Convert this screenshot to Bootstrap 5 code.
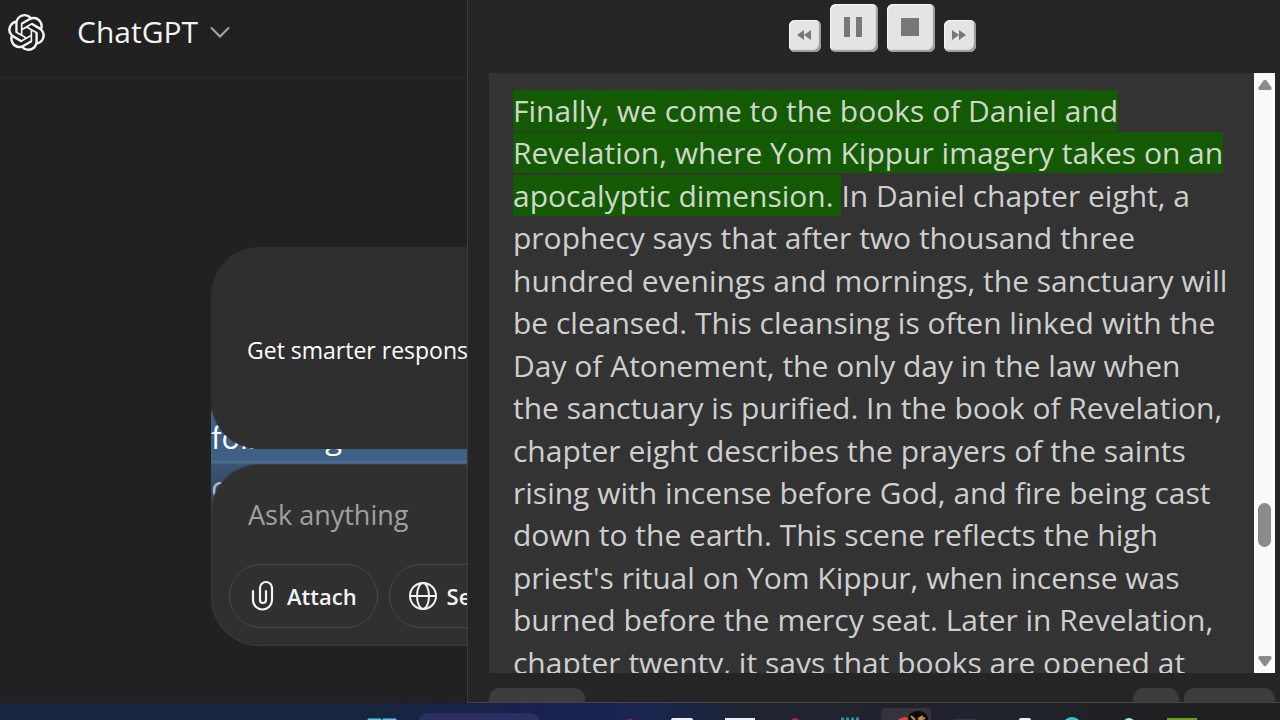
<!DOCTYPE html>
<html lang="en">
<head>
<meta charset="utf-8">
<meta name="viewport" content="width=device-width, initial-scale=1">
<title>ChatGPT</title>
<link href="https://cdn.jsdelivr.net/npm/bootstrap@5.3.0/dist/css/bootstrap.min.css" rel="stylesheet">
<style>
body{background:#212121;color:#fff;font-family:"Open Sans","Noto Sans",sans-serif}
.panes{min-height:0}
.chat-pane{width:467px;background:#212121}
.chat-head{height:78px;padding:0 8px;border-bottom:1px solid #2e2e2e}
.head-row{height:64px;gap:32px}
.model-btn{font-size:30px;line-height:40px;color:#f3f3f3;gap:12px}
.stack{width:760px;margin:169px 0 0 211px;gap:15px}
.quote{left:0;right:0;top:163px;height:110px;padding-top:2px;background:linear-gradient(#3f5f85 0 50px,#48688c 50px 53px,#3a5674 54px,#2b3a4a 110px);font-size:31px;line-height:50px}
.quote-dim{color:#aeb8c4}
.promo{height:202px;padding:4px 36px 0;border-radius:48px;background:#2f2f2f;font-size:23px}
.composer{height:182px;border-radius:48px;background:#303030;border:1px solid #3c3c3c;padding:21px 17px 17px}
.ask{font-size:27px;line-height:40px;height:56px;padding:6px 19px;color:#fff;background:none;border:0;outline:0}
.ask::placeholder{color:#a0a0a0;opacity:1}
.pill-btn{height:64px;border:1px solid #484848;border-radius:32px;padding:0 20px 0 18px;color:#f3f3f3;font-size:22px;font-weight:600;background:none;gap:9px}
.pill-row{gap:11px}
.reader{background:#252525;border-left:1px solid #3c3c3c;border-bottom:1px solid #444;padding:0 5px 0 21px}
.controls{height:73px;gap:9px;padding-bottom:21px}
.key{width:32px;height:32px;border:0;border-radius:6px;background:#e4e4e4;box-shadow:inset -2px -2px 1px #999,inset 1px 1px 1px #f8f8f8;padding:0 2px 2px 0}
.key-lg{width:48px;height:48px}
.page-text{background:#333;color:#cfcfcf;font-size:30px;line-height:1.415;padding:17px 0 0 24px;min-height:0}
.page-text mark{background:#145a02;color:#cfd8cc;padding:0}
.rail{width:21px;background:#fafafa;padding:6px 0}
.thumb{width:13px;height:44px;border-radius:7px;background:#8b8b8b;top:430px;left:4px}
.foot{height:29px;padding-top:15px;gap:5px}
.chip{height:40px;border:0;border-radius:11px;background:#3d3d3d}
.chip-sm{width:46px}
.chip-md{width:91px}
.chip-lg{width:96px}
.taskbar{height:17px;background:linear-gradient(90deg,#17253f 0,#17253f 30%,#182050 42%,#182650 50%,#20242f 59%,#20222c 80%,#202020 95%)}
</style>
</head>
<body class="vh-100 overflow-hidden d-flex flex-column">
<div class="panes d-flex flex-grow-1 overflow-hidden">
<main class="chat-pane flex-shrink-0 overflow-hidden">
<header class="chat-head"><div class="head-row d-flex align-items-center">
<svg width="37" height="37" viewBox="0 0 24 24" fill="#f3f3f3" aria-label="OpenAI"><path d="M22.28 9.82a5.98 5.98 0 0 0-.52-4.91 6.05 6.05 0 0 0-6.51-2.9A6.07 6.07 0 0 0 4.98 4.18a5.98 5.98 0 0 0-4 2.9 6.05 6.05 0 0 0 .75 7.1 5.98 5.98 0 0 0 .51 4.91 6.05 6.05 0 0 0 6.51 2.9A5.98 5.98 0 0 0 13.26 24a6.06 6.06 0 0 0 5.77-4.21 5.99 5.99 0 0 0 4-2.9 6.06 6.06 0 0 0-.75-7.07zm-9.02 12.61a4.48 4.48 0 0 1-2.88-1.04l.14-.08 4.78-2.76a.8.8 0 0 0 .39-.68v-6.74l2.02 1.17a.07.07 0 0 1 .04.05v5.58a4.5 4.5 0 0 1-4.49 4.5zM3.6 18.3a4.47 4.47 0 0 1-.54-3.01l.14.09 4.78 2.76a.77.77 0 0 0 .78 0l5.85-3.37v2.33a.08.08 0 0 1-.04.06L9.74 19.95a4.5 4.5 0 0 1-6.14-1.65zM2.34 7.9a4.49 4.49 0 0 1 2.37-1.97V11.6a.77.77 0 0 0 .39.68l5.81 3.35-2.02 1.17a.08.08 0 0 1-.07 0l-4.83-2.79A4.5 4.5 0 0 1 2.34 7.87zm16.6 3.85-5.84-3.39L15.12 7.2a.08.08 0 0 1 .07 0l4.83 2.79a4.49 4.49 0 0 1-.68 8.1v-5.67a.79.79 0 0 0-.4-.67zm2.01-3.02-.14-.09-4.77-2.78a.78.78 0 0 0-.79 0L9.41 9.23V6.9a.07.07 0 0 1 .03-.06l4.83-2.79a4.5 4.5 0 0 1 6.68 4.66zM8.31 12.86l-2.02-1.16a.08.08 0 0 1-.04-.06V6.07a4.5 4.5 0 0 1 7.38-3.45l-.14.08L8.7 5.46a.8.8 0 0 0-.39.68zm1.1-2.37L12.01 9l2.61 1.5v3l-2.6 1.5-2.61-1.5z"/></svg>
<button class="model-btn btn p-0 border-0 d-flex align-items-center">ChatGPT
<svg width="20" height="12" viewBox="0 0 20 12" fill="none" stroke="#a8a8a8" stroke-width="2"><path d="M1 1.500 10 10.500 19 1.500"/></svg></button>
</div></header>
<section class="stack d-flex flex-column position-relative">
<div class="quote position-absolute"><div>following</div><div class="quote-dim">of</div></div>
<div class="promo position-relative d-flex align-items-center text-nowrap"><span>Get smarter responses</span></div>
<form class="composer position-relative d-flex flex-column justify-content-between">
<input class="ask w-100" type="text" placeholder="Ask anything" aria-label="Ask anything">
<div class="pill-row d-flex">
<button type="button" class="pill-btn d-flex align-items-center"><svg width="30" height="32" viewBox="0 0 30 32" fill="none" stroke="#f3f3f3" stroke-width="2.200" stroke-linecap="round"><path d="M5 11v9a9.500 9.500 0 0 0 19 0V8a6 6 0 0 0-12 0v12a3 3 0 0 0 6 0V11"/></svg>Attach</button>
<button type="button" class="pill-btn d-flex align-items-center"><svg width="30" height="30" viewBox="0 0 30 30" fill="none" stroke="#f3f3f3" stroke-width="2"><circle cx="15" cy="15" r="13"/><ellipse cx="15" cy="15" rx="6" ry="13"/><path d="M2 15h26"/></svg>Search</button>
</div></form>
</section>
</main>
<aside class="reader flex-grow-1 d-flex flex-column overflow-hidden">
<div class="controls d-flex flex-shrink-0 justify-content-center align-items-end">
<button class="key d-flex align-items-center justify-content-center" aria-label="Rewind"><svg width="14" height="10" fill="#777"><path d="M7 0v10L0 5zM14 0v10L7 5z"/></svg></button>
<button class="key key-lg d-flex align-items-center justify-content-center" aria-label="Pause"><svg width="18" height="20" fill="#777"><path d="M0 0h6v20H0zM12 0h6v20h-6z"/></svg></button>
<button class="key key-lg d-flex align-items-center justify-content-center" aria-label="Stop"><svg width="18" height="18" fill="#777"><path d="M0 0h18v18H0z"/></svg></button>
<button class="key d-flex align-items-center justify-content-center" aria-label="Forward"><svg width="14" height="10" fill="#777"><path d="M0 0v10l7-5zM7 0v10l7-5z"/></svg></button>
</div>
<div class="d-flex flex-grow-1 overflow-hidden">
<article class="page-text flex-grow-1 overflow-hidden text-nowrap"><mark>Finally, we come to the books of Daniel and<br>Revelation, where Yom Kippur imagery takes on an<br>apocalyptic dimension. </mark>In Daniel chapter eight, a<br>prophecy says that after two thousand three<br>hundred evenings and mornings, the sanctuary will<br>be cleansed. This cleansing is often linked with the<br>Day of Atonement, the only day in the law when<br>the sanctuary is purified. In the book of Revelation,<br>chapter eight describes the prayers of the saints<br>rising with incense before God, and fire being cast<br>down to the earth. This scene reflects the high<br>priest's ritual on Yom Kippur, when incense was<br>burned before the mercy seat. Later in Revelation,<br>chapter twenty, it says that books are opened at</article>
<div class="rail flex-shrink-0 position-relative d-flex flex-column justify-content-between align-items-center">
<svg width="14" height="11" fill="#8b8b8b"><path d="M5.500 1.500Q7 0 8.500 1.500L13.500 8.500Q14 11 12 11H2Q0 11 .5 8.500z"/></svg>
<div class="thumb position-absolute"></div>
<svg width="14" height="11" fill="#8b8b8b"><path d="M5.500 9.500Q7 11 8.500 9.500L13.500 2.500Q14 0 12 0H2Q0 0 .5 2.500z"/></svg>
</div>
</div>
<div class="foot d-flex flex-shrink-0 overflow-hidden"><button class="chip chip-lg me-auto" aria-label="Speed"></button><button class="chip chip-sm" aria-label="Text size"></button><button class="chip chip-md" aria-label="Settings"></button></div>
</aside>
</div>
<footer class="taskbar flex-shrink-0 d-flex justify-content-center overflow-hidden">
<svg class="flex-shrink-0" width="1280" height="17" viewBox="0 703 1280 17">
<path d="M368 720v-1h13v1zm15 0v-1h13v1z" fill="#5cc8e8" stroke="#5cc8e8"/>
<rect x="418" y="713" width="122" height="20" rx="10" fill="#2b3060"/>
<circle cx="630" cy="723" r="4" fill="#c2185b"/>
<rect x="671" y="718" width="22" height="8" rx="2" fill="#eef"/>
<path d="M725 718h30v3h-30z" fill="#eef"/>
<circle cx="795" cy="723" r="5" fill="#c2185b"/>
<path d="M841 719h20" stroke="#2397a5" stroke-width="3" stroke-dasharray="3 2"/>
<rect x="881" y="708" width="50" height="20" rx="4" fill="#33343c"/>
<circle cx="905" cy="727" r="10" fill="#e5403c"/>
<ellipse cx="918" cy="719" rx="10" ry="8" fill="#0b0906"/>
<path d="m911 716 4 4m3-1 5-3m-4 4 6-2" stroke="#c98f4a" stroke-width="2"/>
<path d="M954 719h22v2h-22z" fill="#44303a"/>
<rect x="1019" y="718" width="12" height="8" rx="2" fill="#eef"/>
<circle cx="1072" cy="727" r="10" fill="#35c5d0"/>
<circle cx="1129" cy="724" r="6" fill="#a5eee0"/>
<path d="M1167 718h30v3h-30z" fill="#6f9a1e"/>
</svg>
</footer>
<script src="https://cdn.jsdelivr.net/npm/bootstrap@5.3.0/dist/js/bootstrap.bundle.min.js"></script>
</body>
</html>
